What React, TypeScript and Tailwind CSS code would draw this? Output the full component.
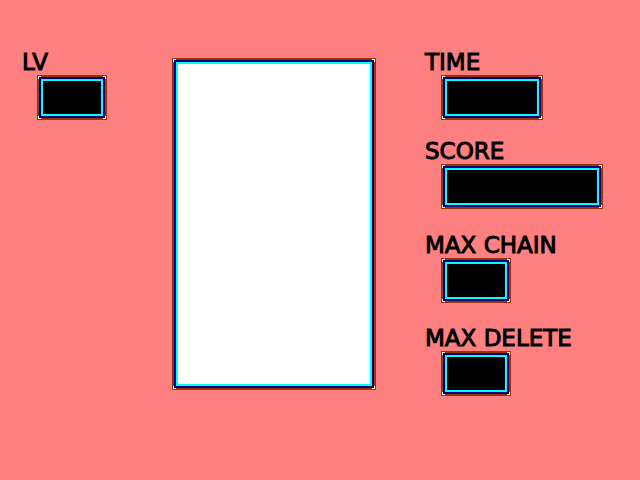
import type { ReactNode } from "react";

function Frame({ className, children }: { className: string; children: ReactNode }) {
  return (
    <div className={`relative border-2 border-[#993300] bg-[#000080] ${className}`}>
      <span className="absolute -left-px -top-px h-[3px] w-[3px] border-l border-t border-[#ffffcc]" />
      <span className="absolute -right-px -top-px h-[3px] w-[3px] border-r border-t border-[#ffffcc]" />
      <span className="absolute -bottom-px -left-px h-[3px] w-[3px] border-b border-l border-[#ffffcc]" />
      <span className="absolute -bottom-px -right-px h-[3px] w-[3px] border-b border-r border-[#ffffcc]" />
      <div className="h-full border-2 border-[#000080]">{children}</div>
    </div>
  );
}

function Readout({ id, label, width, inset, className = "" }: {
  id: string;
  label: string;
  width: string;
  inset: string;
  className?: string;
}) {
  return (
    <div className={className}>
      <label htmlFor={id} className="block whitespace-nowrap text-[23px] leading-[26px]">
        {label}
      </label>
      <div className={inset}>
        <Frame className={`h-[45px] ${width}`}>
          <output id={id} className="block h-full border-2 border-[#00ffff] bg-black text-white" />
        </Frame>
      </div>
    </div>
  );
}

export default function App() {
  return (
    <main className="flex min-h-screen bg-[#ff8080] font-['DejaVu_Sans',Verdana,sans-serif] text-black [-webkit-text-stroke:1px_black]">
      <section className="w-[172px] shrink-0 pl-[22px] pt-[49px]">
        <Readout id="level" label="LV" width="w-[70px]" inset="pl-[15px]" />
      </section>
      <section className="pt-[58px]">
        <Frame className="h-[332px] w-[204px]">
          <div className="h-full border-2 border-[#00ffff] bg-white" />
        </Frame>
      </section>
      <section className="flex-1 pl-[49px] pt-[49px]">
        <Readout id="time" label="TIME" width="w-[102px]" inset="pl-4" />
        <Readout id="score" label="SCORE" width="w-[162px]" inset="pl-4" className="mt-[18px]" />
        <Readout id="chain" label="MAX CHAIN" width="w-[70px]" inset="pl-4" className="mt-[23px]" />
        <Readout id="delete" label="MAX DELETE" width="w-[70px]" inset="pl-4" className="mt-[22px]" />
      </section>
    </main>
  );
}
